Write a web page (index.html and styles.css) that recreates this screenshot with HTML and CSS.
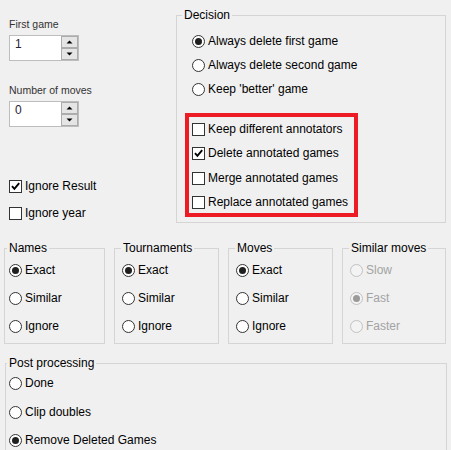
FILE: index.html
```html
<!DOCTYPE html>
<html>
<head>
<meta charset="utf-8">
<link rel="stylesheet" href="styles.css">
</head>
<body>
<div class="dlg">
  <div class="top">
    <div class="left">
      <div class="lbl">First game</div>
      <div class="spin">
        <span class="val">1</span>
        <span class="btns">
          <span class="sb"><svg width="15" height="10" viewBox="0 0 15 10"><polygon points="4.5,6.5 10.5,6.5 7.5,3.5" fill="#000"/></svg></span>
          <span class="sb"><svg width="15" height="10" viewBox="0 0 15 10"><polygon points="4.5,3.5 10.5,3.5 7.5,6.5" fill="#000"/></svg></span>
        </span>
      </div>
      <div class="lbl lbl2">Number of moves</div>
      <div class="spin">
        <span class="val">0</span>
        <span class="btns">
          <span class="sb"><svg width="15" height="10" viewBox="0 0 15 10"><polygon points="4.5,6.5 10.5,6.5 7.5,3.5" fill="#000"/></svg></span>
          <span class="sb"><svg width="15" height="10" viewBox="0 0 15 10"><polygon points="4.5,3.5 10.5,3.5 7.5,6.5" fill="#000"/></svg></span>
        </span>
      </div>
      <div class="chk ir"><span class="box"><svg width="11" height="11" viewBox="0 0 11 11"><path d="M2 5.2 L4.4 7.8 L9.2 2.2" fill="none" stroke="#000" stroke-width="1.9"/></svg></span>Ignore Result</div>
      <div class="chk iy"><span class="box"></span>Ignore year</div>
    </div>
    <fieldset class="grp decision">
      <legend>Decision</legend>
      <div class="dec-body">
        <div class="opt"><span class="rd on"></span>Always delete first game</div>
        <div class="opt"><span class="rd"></span>Always delete second game</div>
        <div class="opt"><span class="rd"></span>Keep 'better' game</div>
        <div class="redbox">
          <div class="chk"><span class="box"></span>Keep different annotators</div>
          <div class="chk"><span class="box"><svg width="11" height="11" viewBox="0 0 11 11"><path d="M2 5.2 L4.4 7.8 L9.2 2.2" fill="none" stroke="#000" stroke-width="1.9"/></svg></span>Delete annotated games</div>
          <div class="chk r3"><span class="box"></span>Merge annotated games</div>
          <div class="chk"><span class="box"></span>Replace annotated games</div>
        </div>
      </div>
    </fieldset>
  </div>

  <div class="row4">
    <fieldset class="grp small names">
      <legend>Names</legend>
      <div class="sm-body">
        <div class="opt"><span class="rd on"></span>Exact</div>
        <div class="opt"><span class="rd"></span>Similar</div>
        <div class="opt"><span class="rd"></span>Ignore</div>
      </div>
    </fieldset>
    <fieldset class="grp small">
      <legend>Tournaments</legend>
      <div class="sm-body">
        <div class="opt"><span class="rd on"></span>Exact</div>
        <div class="opt"><span class="rd"></span>Similar</div>
        <div class="opt"><span class="rd"></span>Ignore</div>
      </div>
    </fieldset>
    <fieldset class="grp small">
      <legend>Moves</legend>
      <div class="sm-body">
        <div class="opt"><span class="rd on"></span>Exact</div>
        <div class="opt"><span class="rd"></span>Similar</div>
        <div class="opt"><span class="rd"></span>Ignore</div>
      </div>
    </fieldset>
    <fieldset class="grp small simm">
      <legend>Similar moves</legend>
      <div class="sm-body">
        <div class="opt dis"><span class="rd"></span>Slow</div>
        <div class="opt dis"><span class="rd on"></span>Fast</div>
        <div class="opt dis"><span class="rd"></span>Faster</div>
      </div>
    </fieldset>
  </div>

  <fieldset class="grp post">
    <legend>Post processing</legend>
    <div class="post-body">
      <div class="opt"><span class="rd"></span>Done</div>
      <div class="opt o2"><span class="rd"></span>Clip doubles</div>
      <div class="opt o3"><span class="rd on"></span>Remove Deleted Games</div>
    </div>
  </fieldset>
</div>
</body>
</html>
```

FILE: styles.css
```css
* { box-sizing: border-box; }

body {
  margin: 0;
  background: #f0f0f0;
  font: 12px "Liberation Sans", Arial, sans-serif;
  color: #000;
  width: 451px;
  height: 450px;
  overflow: hidden;
}

.top {
  display: flex;
  align-items: flex-start;
}

.left {
  width: 176px;
  padding: 18px 0 0 9px;
  display: flex;
  flex-direction: column;
  align-items: flex-start;
}

.lbl {
  font-size: 10.5px;
  line-height: 13px;
  color: #333;
}

.lbl2 { margin-top: 23px; }

.spin {
  margin-top: 4px;
  width: 70px;
  height: 26px;
  border: 1px solid #bdbdbd;
  background: #fff;
  display: flex;
  justify-content: space-between;
}

.val {
  padding-left: 5px;
  line-height: 17px;
  color: #2a2233;
}

.btns {
  width: 17px;
  display: flex;
  flex-direction: column;
  background: #f0f0f0;
}

.sb {
  height: 12px;
  border: 1px solid #acacac;
  background: #e5e5e5;
  display: flex;
}

.chk {
  display: flex;
  align-items: center;
  height: 16px;
  gap: 3px;
  white-space: nowrap;
}

.ir { margin-top: 51px; }
.iy { margin-top: 11px; }

.box {
  width: 13px;
  height: 13px;
  border: 1px solid #333;
  background: #fff;
  display: flex;
  flex: none;
}

.grp {
  margin: 0;
  padding: 0;
  border: 1px solid #d5d5d5;
  min-width: 0;
}

.grp legend {
  padding: 0 2px;
  margin-left: 5px;
  line-height: 16px;
  font-size: 12px;
}

.decision {
  width: 270px;
  margin-top: 7px;
}

.dec-body {
  padding: 10px 0 5px 8px;
}

.opt {
  display: flex;
  align-items: center;
  height: 16px;
  gap: 3px;
  white-space: nowrap;
}

.dec-body > .opt { margin-left: 7px; }
.dec-body > .opt + .opt { margin-top: 8px; }

.redbox {
  margin-top: 16px;
  width: 173px;
  border: 4px solid #ed1c24;
  padding: 4px 0 3px 3px;
  display: flex;
  flex-direction: column;
  gap: 8px;
}

.redbox .r3 { margin-top: 1px; }

.rd {
  width: 13px;
  height: 13px;
  border-radius: 50%;
  border: 1px solid #333;
  background: #fff;
  display: flex;
  align-items: center;
  justify-content: center;
  flex: none;
}

.rd.on::after {
  content: "";
  width: 7px;
  height: 7px;
  border-radius: 50%;
  background: #1f1f1f;
}

.dis { color: #a3a3a3; }
.dis .rd { border-color: #c2c2c2; background: #f3f3f3; }
.dis .rd.on::after { background: #9a9a9a; }

.row4 {
  display: grid;
  grid-template-columns: 101px 105px 105px 104px;
  column-gap: 9px;
  padding-left: 4px;
  margin-top: 17px;
}

.small legend { margin-left: 6px; }
.small.names legend { margin-left: 2px; }

.sm-body {
  padding: 6px 0 9px 7px;
  display: flex;
  flex-direction: column;
  gap: 12px;
}

.names .sm-body { padding-left: 4px; }

.post {
  margin: 11px 0 0 5px;
  width: 442px;
}

.post legend { margin-left: 1px; }

.post-body {
  padding: 4px 0 20px 3px;
}

.post-body .o2 { margin-top: 13px; }
.post-body .o3 { margin-top: 12px; }
```
